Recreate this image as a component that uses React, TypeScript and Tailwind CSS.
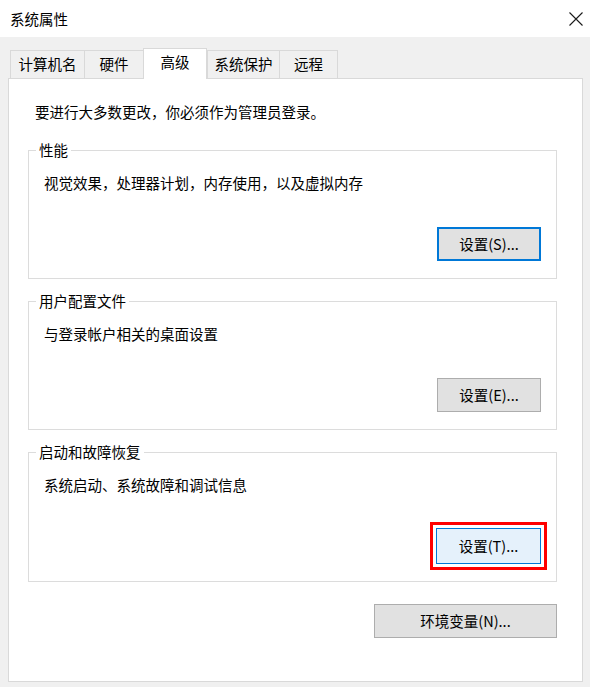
import type { ReactElement, ReactNode } from "react";

interface GroupBoxProps {
  label: string;
  text: string;
  children: ReactNode;
  height: string;
}

const tabs: { label: string; width: string; active?: boolean }[] = [
  { label: "计算机名", width: "w-[74px]" },
  { label: "硬件", width: "w-[59px]" },
  { label: "高级", width: "w-[64px]", active: true },
  { label: "系统保护", width: "w-[72px]" },
  { label: "远程", width: "w-[59px]" },
];

const GroupBox = ({ label, text, children, height }: GroupBoxProps): ReactElement => (
  <div className={`relative flex flex-col border border-[#dcdcdc] ${height}`}>
    <span className="absolute -top-[11px] left-[7px] bg-white px-[3px] leading-[20px]">{label}</span>
    <p className="pl-[15px] pt-[22px] leading-[20px]">{text}</p>
    <div className="mt-auto mb-[17px] mr-[15px] flex justify-end">{children}</div>
  </div>
);

const App = (): ReactElement => (
  <div
    className="flex h-[687px] w-[590px] flex-col bg-[#f0f0f0] text-[14.5px] text-black"
    style={{ fontFamily: '"Noto Sans CJK SC", "Noto Sans", sans-serif' }}
  >
    <div className="flex h-[37px] items-center justify-between bg-white pl-[10px] pr-[7px]">
      <span className="leading-[20px]">系统属性</span>
      <svg width="14" height="14" viewBox="0 0 14 14" fill="none">
        <path d="M0.5 0.5l13 13M13.5 0.5l-13 13" stroke="#1a1a1a" strokeWidth="1.1" />
      </svg>
    </div>

    <div className="flex h-[41px] items-end pl-[10px]">
      {tabs.map((tab, i) => (
        <div
          key={tab.label}
          className={`flex items-center justify-center border-t border-l border-[#d9d9d9] leading-[20px] ${tab.width} ${
            tab.active
              ? "relative z-10 -mb-px h-[31px] border-r bg-white pb-[4px]"
              : "h-[28px] bg-[#f0f0f0] pb-[1px]"
          } ${i === tabs.length - 1 ? "border-r" : ""}`}
        >
          {tab.label}
        </div>
      ))}
    </div>

    <div className="ml-[8px] flex h-[604px] w-[575px] flex-col border border-[#d9d9d9] bg-white pl-[19px] pr-[25px]">
      <p className="mt-[23px] pl-[7px] leading-[20px]">要进行大多数更改，你必须作为管理员登录。</p>

      <div className="mt-[28px] flex flex-col gap-[22px]">
        <GroupBox label="性能" text="视觉效果，处理器计划，内存使用，以及虚拟内存" height="h-[129px]">
          <button
            type="button"
            className="h-[34px] w-[104px] border-2 border-[#0078d7] bg-[#e1e1e1] leading-[20px]"
          >
            设置(S)...
          </button>
        </GroupBox>

        <GroupBox label="用户配置文件" text="与登录帐户相关的桌面设置" height="h-[129px]">
          <button
            type="button"
            className="h-[34px] w-[104px] border border-[#adadad] bg-[#e1e1e1] leading-[20px]"
          >
            设置(E)...
          </button>
        </GroupBox>

        <GroupBox label="启动和故障恢复" text="系统启动、系统故障和调试信息" height="h-[130px]">
          <button
            type="button"
            className="h-[36px] w-[105px] border border-[#0078d7] bg-[#e5f1fb] leading-[20px] outline-[3px] outline-offset-[3px] outline-[#ff0000] outline-solid"
          >
            设置(T)...
          </button>
        </GroupBox>
      </div>

      <div className="mt-[22px] flex justify-end">
        <button
          type="button"
          className="h-[34px] w-[183px] border border-[#adadad] bg-[#e1e1e1] leading-[20px]"
        >
          环境变量(N)...
        </button>
      </div>
    </div>
  </div>
);

export default App;
